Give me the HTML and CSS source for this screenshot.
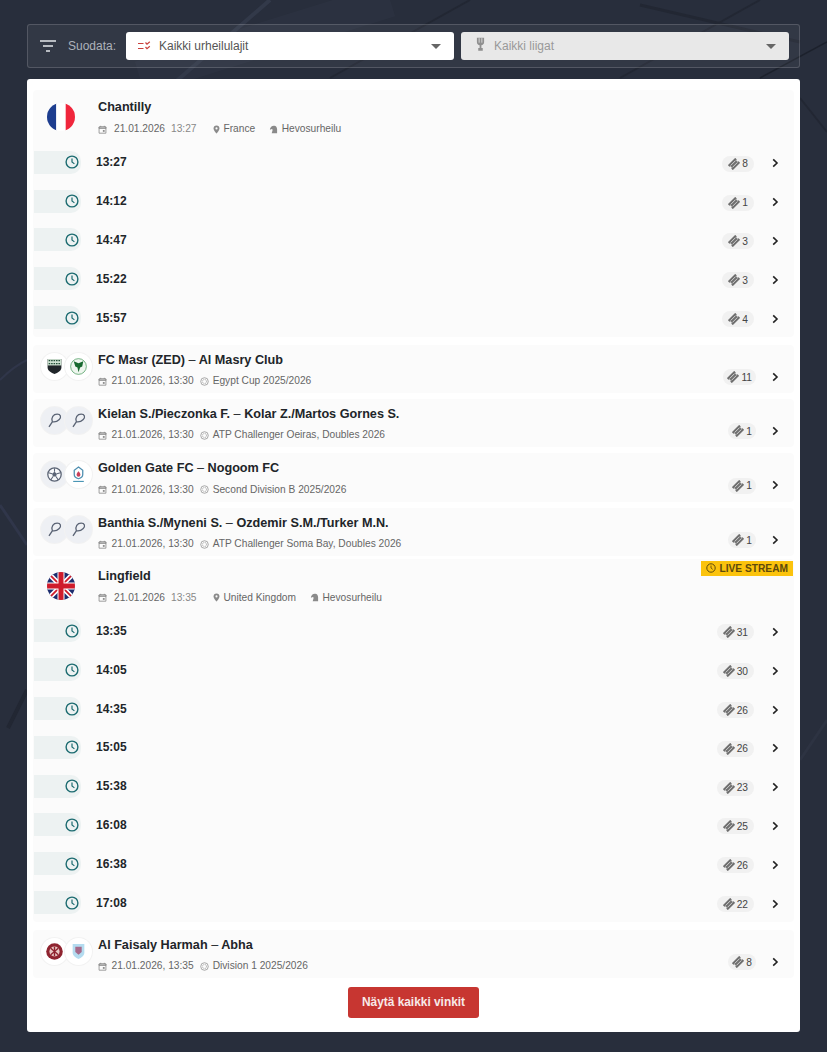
FILE: index.html
```html
<!DOCTYPE html>
<html>

<head>
	<meta charset="utf-8">
	<title>Vinkit</title>
	<link rel="stylesheet" href="styles.css">
</head>

<body>
	<svg class="sprite" xmlns="http://www.w3.org/2000/svg">
		<symbol id="i-clock" viewBox="0 0 14 14"><circle cx="7" cy="7" r="5.9" fill="none" stroke="currentColor" stroke-width="1.4"/><path d="M7 3.6V7l2.4 1.9" fill="none" stroke="currentColor" stroke-width="1.2"/></symbol>
		<symbol id="i-ticket" viewBox="0 0 12 12"><g transform="rotate(-45 6 6)"><path d="M.8 2.500h10.400v2.200a1.300 1.300 0 0 0 0 2.600v2.200H.8V7.300a1.300 1.300 0 0 0 0-2.600z" fill="currentColor"/><path d="M2.500 4.700h7M2.500 7.300h7" stroke="#f1f1f1" stroke-width=".7"/></g></symbol>
		<symbol id="i-chevron" viewBox="0 0 10 10"><path d="M3.2 1.4L7 5 3.2 8.6" fill="none" stroke="currentColor" stroke-width="1.6"/></symbol>
		<symbol id="i-cal" viewBox="0 0 10 10"><path d="M1.2 2.200h7.600v6.900H1.200z" fill="none" stroke="currentColor" stroke-width=".9"/><path d="M1.200 2.200h7.600v1.700H1.200zM3 .9v1.400M7 .9v1.400" fill="none" stroke="currentColor" stroke-width=".9"/><path d="M5.400 5.600h2v2h-2z" fill="currentColor"/></symbol>
		<symbol id="i-pin" viewBox="0 0 10 10"><path d="M5 .6c2 0 3.300 1.400 3.300 3.200C8.300 6 5 9.400 5 9.400S1.700 6 1.700 3.800C1.700 2 3 .6 5 .6z" fill="currentColor"/><circle cx="5" cy="3.800" r="1.200" fill="#fbfbfb"/></symbol>
		<symbol id="i-horse" viewBox="0 0 10 10"><path d="M6 .8A4.400 4.400 0 0 0 1 5.400l2.200-.9.9.9L3 9.200h6V4.600C9 2.600 7.700 1 6 .8z" fill="currentColor"/></symbol>
		<symbol id="i-league" viewBox="0 0 10 10"><circle cx="5" cy="5" r="4.200" fill="none" stroke="currentColor" stroke-width=".8"/><circle cx="5" cy="5" r="2.300" fill="none" stroke="currentColor" stroke-width=".8" stroke-dasharray="1 .7"/></symbol>
		<symbol id="i-racket" viewBox="0 0 16 16"><path d="M6 9.200C4.500 5 7 2 10.500 2c3.500 0 4 3 2 5-2 2-4.500 2.700-6.500 2.200L2.800 14" fill="none" stroke="currentColor" stroke-width="1.200"/></symbol>
		<symbol id="i-ball" viewBox="0 0 16 16"><circle cx="8" cy="8" r="6.300" fill="#f8f9fb" stroke="currentColor" stroke-width="1.200"/><path d="M8 5.500l2.300 1.700-.9 2.600H6.600l-.9-2.600z" fill="currentColor"/><path d="M8 2v3.500M2.400 6.400l3.300.8M13.600 6.400l-3.300.8M4.600 13l2-3.200M11.400 13l-2-3.200" fill="none" stroke="currentColor" stroke-width="1"/></symbol>
	</svg>

	<svg class="backdrop" viewBox="0 0 827 1052" preserveAspectRatio="none">
		<path d="M390 0L140 78" stroke="#343b4b" stroke-width="34" opacity=".3"/>
		<path d="M270 0L120 130" stroke="#323949" stroke-width="4"/>
		<path d="M760 0L620 78" stroke="#222733" stroke-width="2"/>
		<path d="M470 0L330 78" stroke="#222733" stroke-width="2"/>
		<path d="M640 5L800 42" stroke="#222733" stroke-width="3"/>
		<path d="M827 42L760 78" stroke="#1c212c" stroke-width="1.500"/>
		<path d="M800 98L827 132" stroke="#222733" stroke-width="2"/>
		<path d="M0 380Q14 366 27 360" stroke="#30364a" stroke-width="2" fill="none"/>
		<path d="M0 505L27 545" stroke="#30364a" stroke-width="3"/>
		<path d="M8 728L27 690" stroke="#222733" stroke-width="4"/>
		<path d="M800 760L827 720" stroke="#2d3342" stroke-width="3"/>
	</svg>

	<div class="page">
		<div class="filters">
			<svg class="filter-icon" viewBox="0 0 16 12"><path d="M0 1h16M3 6h10M6 11h4" stroke="#e4e6ea" stroke-width="1.500"/></svg>
			<span class="filter-label">Suodata:</span>
			<div class="select">
				<svg class="select-icon" viewBox="0 0 14 10"><path d="M1 2.500h5.500M1 7.500h5.500" stroke="#c9403c" stroke-width="1.200"/><path d="M8.500 1.500l1.500 1.700L12.800 .8M8.500 6l1.500 1.700L12.800 5.300" fill="none" stroke="#c9403c" stroke-width="1.200"/></svg>
				<span>Kaikki urheilulajit</span>
				<i class="caret"></i>
			</div>
			<div class="select select-off">
				<svg class="select-icon trophy" viewBox="0 0 10 16"><path d="M1 .5h8v5c0 2-1.500 3-3 3.300V12h1.500v3h-5v-3H4V8.800C2.500 8.500 1 7.500 1 5.500z" fill="#8f8f8f"/><path d="M3.500 1v5M6.500 1v5" stroke="#e8e8e8" stroke-width=".9"/></svg>
				<span>Kaikki liigat</span>
				<i class="caret"></i>
			</div>
		</div>

		<div class="list">
			<div class="group">
				<div class="venue">
					<svg class="flag" viewBox="0 0 28 28"><defs><clipPath id="round"><circle cx="14" cy="14" r="14"/></clipPath></defs><g clip-path="url(#round)"><path d="M0 0h9.300v28H0z" fill="#1d3d8f"/><path d="M9.300 0h9.400v28H9.300z" fill="#fff"/><path d="M18.700 0H28v28h-9.300z" fill="#f0263c"/></g></svg>
					<div>
						<div class="title">Chantilly</div>
						<div class="meta">
							<svg><use href="#i-cal"/></svg><span class="date">21.01.2026</span><span class="hour">13:27</span>
							<svg class="pin"><use href="#i-pin"/></svg><span>France</span>
							<svg class="horse"><use href="#i-horse"/></svg><span>Hevosurheilu</span>
						</div>
					</div>
				</div>
				<div class="slot"><span class="slot-tab"><svg><use href="#i-clock"/></svg></span><b>13:27</b><span class="tips"><svg><use href="#i-ticket"/></svg>8</span><svg class="chevron"><use href="#i-chevron"/></svg></div>
				<div class="slot"><span class="slot-tab"><svg><use href="#i-clock"/></svg></span><b>14:12</b><span class="tips"><svg><use href="#i-ticket"/></svg>1</span><svg class="chevron"><use href="#i-chevron"/></svg></div>
				<div class="slot"><span class="slot-tab"><svg><use href="#i-clock"/></svg></span><b>14:47</b><span class="tips"><svg><use href="#i-ticket"/></svg>3</span><svg class="chevron"><use href="#i-chevron"/></svg></div>
				<div class="slot"><span class="slot-tab"><svg><use href="#i-clock"/></svg></span><b>15:22</b><span class="tips"><svg><use href="#i-ticket"/></svg>3</span><svg class="chevron"><use href="#i-chevron"/></svg></div>
				<div class="slot"><span class="slot-tab"><svg><use href="#i-clock"/></svg></span><b>15:57</b><span class="tips"><svg><use href="#i-ticket"/></svg>4</span><svg class="chevron"><use href="#i-chevron"/></svg></div>
			</div>

			<div class="match">
				<div class="crests">
					<span class="crest"><svg viewBox="0 0 16 16"><path d="M1.500 1h13v8c0 3-3.500 5-6.500 6-3-1-6.500-3-6.500-6z" fill="#20262a"/><path d="M1.500 1h13v6h-13z" fill="#cfe3d3"/><path d="M2.500 2.500h11M2.500 5.300h11" stroke="#24503a" stroke-width="1.300" stroke-dasharray="1.500 .8"/></svg></span>
					<span class="crest"><svg viewBox="0 0 16 16"><circle cx="8" cy="8" r="7.400" fill="#eef6ee" stroke="#2d8a45" stroke-width=".6"/><path d="M3.500 3l4.500 2 4.500-2-1 5-2 1L8 13.500 7 9 5 8z" fill="#17692f"/></svg></span>
				</div>
				<div class="match-text">
					<div class="title">FC Masr (ZED) <em>–</em> Al Masry Club</div>
					<div class="meta"><svg><use href="#i-cal"/></svg><span class="stamp">21.01.2026, 13:30</span><svg class="league"><use href="#i-league"/></svg><span>Egypt Cup 2025/2026</span></div>
				</div>
				<span class="tips tips-match"><svg><use href="#i-ticket"/></svg>11</span><svg class="chevron chevron-match"><use href="#i-chevron"/></svg>
			</div>

			<div class="match">
				<div class="crests">
					<span class="crest crest-grey"><svg><use href="#i-racket"/></svg></span>
					<span class="crest crest-grey"><svg><use href="#i-racket"/></svg></span>
				</div>
				<div class="match-text">
					<div class="title">Kielan S./Pieczonka F. <em>–</em> Kolar Z./Martos Gornes S.</div>
					<div class="meta"><svg><use href="#i-cal"/></svg><span class="stamp">21.01.2026, 13:30</span><svg class="league"><use href="#i-league"/></svg><span>ATP Challenger Oeiras, Doubles 2026</span></div>
				</div>
				<span class="tips tips-match"><svg><use href="#i-ticket"/></svg>1</span><svg class="chevron chevron-match"><use href="#i-chevron"/></svg>
			</div>

			<div class="match">
				<div class="crests">
					<span class="crest crest-grey"><svg><use href="#i-ball"/></svg></span>
					<span class="crest"><svg viewBox="0 0 16 16"><path d="M8 1l4 3v4c0 2-2 3.500-4 4-2-.5-4-2-4-4V4z" fill="none" stroke="#4f8fb0" stroke-width="1.200"/><path d="M8 5c1.300 1.500 1.800 2.300 1.800 3.200a1.800 1.800 0 0 1-3.600 0C6.200 7.300 6.700 6.500 8 5z" fill="#c9405a"/><path d="M3 14.500h10" stroke="#3f8fb0" stroke-width="1"/></svg></span>
				</div>
				<div class="match-text">
					<div class="title">Golden Gate FC <em>–</em> Nogoom FC</div>
					<div class="meta"><svg><use href="#i-cal"/></svg><span class="stamp">21.01.2026, 13:30</span><svg class="league"><use href="#i-league"/></svg><span>Second Division B 2025/2026</span></div>
				</div>
				<span class="tips tips-match"><svg><use href="#i-ticket"/></svg>1</span><svg class="chevron chevron-match"><use href="#i-chevron"/></svg>
			</div>

			<div class="match match-last">
				<div class="crests">
					<span class="crest crest-grey"><svg><use href="#i-racket"/></svg></span>
					<span class="crest crest-grey"><svg><use href="#i-racket"/></svg></span>
				</div>
				<div class="match-text">
					<div class="title">Banthia S./Myneni S. <em>–</em> Ozdemir S.M./Turker M.N.</div>
					<div class="meta"><svg><use href="#i-cal"/></svg><span class="stamp">21.01.2026, 13:30</span><svg class="league"><use href="#i-league"/></svg><span>ATP Challenger Soma Bay, Doubles 2026</span></div>
				</div>
				<span class="tips tips-match"><svg><use href="#i-ticket"/></svg>1</span><svg class="chevron chevron-match"><use href="#i-chevron"/></svg>
			</div>

			<div class="group">
				<span class="live"><svg><use href="#i-clock"/></svg>LIVE STREAM</span>
				<div class="venue">
					<svg class="flag" viewBox="0 0 28 28"><defs><clipPath id="round2"><circle cx="14" cy="14" r="14"/></clipPath></defs><g clip-path="url(#round2)"><path d="M0 0h28v28H0z" fill="#1c2c6e"/><path d="M0 0l28 28M28 0L0 28" stroke="#fff" stroke-width="5"/><path d="M0 0l28 28M28 0L0 28" stroke="#cf1b2b" stroke-width="1.800"/><path d="M14 0v28M0 14h28" stroke="#fff" stroke-width="7"/><path d="M14 0v28M0 14h28" stroke="#cf1b2b" stroke-width="5"/></g></svg>
					<div>
						<div class="title">Lingfield</div>
						<div class="meta">
							<svg><use href="#i-cal"/></svg><span class="date">21.01.2026</span><span class="hour">13:35</span>
							<svg class="pin"><use href="#i-pin"/></svg><span>United Kingdom</span>
							<svg class="horse"><use href="#i-horse"/></svg><span>Hevosurheilu</span>
						</div>
					</div>
				</div>
				<div class="slot"><span class="slot-tab"><svg><use href="#i-clock"/></svg></span><b>13:35</b><span class="tips"><svg><use href="#i-ticket"/></svg>31</span><svg class="chevron"><use href="#i-chevron"/></svg></div>
				<div class="slot"><span class="slot-tab"><svg><use href="#i-clock"/></svg></span><b>14:05</b><span class="tips"><svg><use href="#i-ticket"/></svg>30</span><svg class="chevron"><use href="#i-chevron"/></svg></div>
				<div class="slot"><span class="slot-tab"><svg><use href="#i-clock"/></svg></span><b>14:35</b><span class="tips"><svg><use href="#i-ticket"/></svg>26</span><svg class="chevron"><use href="#i-chevron"/></svg></div>
				<div class="slot"><span class="slot-tab"><svg><use href="#i-clock"/></svg></span><b>15:05</b><span class="tips"><svg><use href="#i-ticket"/></svg>26</span><svg class="chevron"><use href="#i-chevron"/></svg></div>
				<div class="slot"><span class="slot-tab"><svg><use href="#i-clock"/></svg></span><b>15:38</b><span class="tips"><svg><use href="#i-ticket"/></svg>23</span><svg class="chevron"><use href="#i-chevron"/></svg></div>
				<div class="slot"><span class="slot-tab"><svg><use href="#i-clock"/></svg></span><b>16:08</b><span class="tips"><svg><use href="#i-ticket"/></svg>25</span><svg class="chevron"><use href="#i-chevron"/></svg></div>
				<div class="slot"><span class="slot-tab"><svg><use href="#i-clock"/></svg></span><b>16:38</b><span class="tips"><svg><use href="#i-ticket"/></svg>26</span><svg class="chevron"><use href="#i-chevron"/></svg></div>
				<div class="slot"><span class="slot-tab"><svg><use href="#i-clock"/></svg></span><b>17:08</b><span class="tips"><svg><use href="#i-ticket"/></svg>22</span><svg class="chevron"><use href="#i-chevron"/></svg></div>
			</div>

			<div class="match">
				<div class="crests">
					<span class="crest"><svg viewBox="0 0 16 16"><circle cx="8" cy="8" r="7.800" fill="#8f2430"/><circle cx="8" cy="8" r="4.800" fill="#e9c9c5"/><path d="M4.500 5l7 6M11.500 5l-7 6M8 3.500v9" stroke="#8f2430" stroke-width="1.300"/></svg></span>
					<span class="crest"><svg viewBox="0 0 16 16"><path d="M2.500 1h11v8c0 3-3 5-5.500 6-2.500-1-5.500-3-5.500-6z" fill="#b4dcf0"/><path d="M5 3.500h6v5L8 11 5 8.500z" fill="#a66a8a"/></svg></span>
				</div>
				<div class="match-text">
					<div class="title">Al Faisaly Harmah <em>–</em> Abha</div>
					<div class="meta"><svg><use href="#i-cal"/></svg><span class="stamp">21.01.2026, 13:35</span><svg class="league"><use href="#i-league"/></svg><span>Division 1 2025/2026</span></div>
				</div>
				<span class="tips tips-match"><svg><use href="#i-ticket"/></svg>8</span><svg class="chevron chevron-match"><use href="#i-chevron"/></svg>
			</div>

			<div class="more-row">
				<button class="more">Näytä kaikki vinkit</button>
			</div>
		</div>
	</div>
</body>

</html>
```

FILE: styles.css
```css
* {
	box-sizing: border-box;
}

html,
body {
	margin: 0;
	height: 100%;
}

body {
	background: #282e3c;
	color: #212529;
	font-family: "Liberation Sans", Arial, sans-serif;
	overflow: hidden;
}

.sprite {
	display: none;
}

.backdrop {
	position: absolute;
	top: 0;
	left: 0;
	width: 827px;
	height: 1052px;
}

.page {
	position: relative;
	padding: 24px 27px 0;
}

/* filter bar */
.filters {
	display: flex;
	align-items: center;
	height: 44px;
	padding: 0 10px 0 12px;
	background: rgba(255, 255, 255, 0.05);
	border: 1px solid rgba(255, 255, 255, 0.16);
	border-radius: 3px;
}

.filter-icon {
	width: 16px;
	height: 12px;
	margin-right: 12px;
}

.filter-label {
	width: 58px;
	font-size: 12px;
	color: #aeb2ba;
}

.select {
	display: flex;
	align-items: center;
	width: 328px;
	height: 28px;
	padding: 0 13px 0 11px;
	background: #fff;
	border-radius: 3px;
	font-size: 12px;
	color: #555;
}

.select + .select {
	margin-left: 7px;
}

.select-off {
	background: #e8e8e8;
	color: #999;
}

.select-icon {
	width: 14px;
	height: 10px;
	margin-right: 8px;
}

.trophy {
	width: 9px;
	height: 15px;
	margin: -3px 9px 0 4px;
}

.caret {
	margin-left: auto;
	border-top: 5px solid #666;
	border-left: 5px solid transparent;
	border-right: 5px solid transparent;
}

/* list */
.list {
	margin-top: 11px;
	height: 953px;
	padding: 11px 6px 0;
	background: #fff;
	border-radius: 3px;
}

.group {
	position: relative;
	margin-bottom: 7.6px;
	background: #fbfbfb;
	border-radius: 4px;
}

.venue {
	display: flex;
	height: 53px;
	padding-left: 14px;
}

.flag {
	width: 28px;
	height: 28px;
	margin: 13px 23px 0 0;
	flex: none;
}

.title {
	padding-top: 10px;
	font-size: 12.65px;
	line-height: 15px;
	font-weight: bold;
	color: #212529;
}

.title em {
	font-style: normal;
	font-weight: normal;
}

.meta {
	display: flex;
	align-items: center;
	margin-top: 7px;
	font-size: 10.2px;
	line-height: 14px;
	color: #666;
}

.meta svg {
	width: 9px;
	height: 9px;
	margin-right: 7px;
	color: #8a8a8a;
	flex: none;
}

.hour {
	margin-left: 6px;
	color: #888;
}

.meta .pin {
	margin: 0 3px 0 15px;
}

.meta .horse {
	margin: 0 3.5px 0 14px;
}

/* time rows */
.slot {
	display: flex;
	align-items: center;
	height: 38.8px;
	padding: 0 14px 0 1px;
}

.slot-tab {
	display: flex;
	align-items: center;
	justify-content: flex-end;
	width: 47px;
	height: 23px;
	padding-right: 2px;
	background: #edf2f2;
	border-radius: 0 10px 10px 0;
	color: #1c6b70;
}

.slot-tab svg {
	width: 14px;
	height: 14px;
}

.slot b {
	margin-left: 15px;
	font-size: 12px;
	color: #212529;
}

.tips {
	display: flex;
	align-items: center;
	height: 16px;
	margin: 3px 0 0 auto;
	padding: 0 6px;
	background: #f1f1f1;
	border-radius: 8px;
	font-size: 10.2px;
	color: #444;
}

.tips svg {
	width: 12px;
	height: 12px;
	margin-right: 2px;
	color: #6f6f6f;
}

.chevron {
	width: 10px;
	height: 10px;
	margin: 2px 0 0 16px;
	color: #222;
}

/* match rows */
.match {
	display: flex;
	align-items: flex-start;
	height: 48.5px;
	margin-bottom: 5.9px;
	padding: 0 14px 0 8px;
	background: #fbfbfb;
	border-radius: 4px;
}

.match-last {
	margin-bottom: 2.3px;
}

.crests {
	display: flex;
	width: 57px;
	padding-top: 8px;
	flex: none;
}

.crest {
	display: flex;
	align-items: center;
	justify-content: center;
	width: 27px;
	height: 27px;
	background: #fff;
	border-radius: 50%;
	box-shadow: 0 0 0 1px #f2f2f2;
	flex: none;
}

.crest + .crest {
	margin-left: -3px;
}

.crest svg {
	width: 17px;
	height: 17px;
}

.crest-grey {
	background: #eef0f4;
	color: #5b6475;
}

.match-text .title {
	padding-top: 8px;
}

.match-text .meta {
	margin-top: 6.5px;
}

.stamp {
	margin-left: -2.5px;
}

.meta .league {
	margin: 0 3.5px 0 6.5px;
}

.tips-match {
	margin: 24.5px 0 0 auto;
	padding: 0 4px;
}

.chevron-match {
	margin: 27px 0 0 14px;
}

/* live badge */
.live {
	position: absolute;
	top: 2px;
	right: 1px;
	display: flex;
	align-items: center;
	height: 15px;
	padding: 0 5px;
	background: #fbc30d;
	font-size: 10.2px;
	font-weight: bold;
	color: #5e4a0c;
}

.live svg {
	width: 10px;
	height: 10px;
	margin-right: 4px;
}

/* footer button */
.more-row {
	display: flex;
	justify-content: center;
	margin-top: 8.5px;
}

.more {
	width: 131px;
	height: 31px;
	padding: 0;
	background: #c73631;
	border: none;
	border-radius: 3px;
	font-family: inherit;
	font-size: 11.9px;
	font-weight: bold;
	color: #f7e9e8;
}
```
